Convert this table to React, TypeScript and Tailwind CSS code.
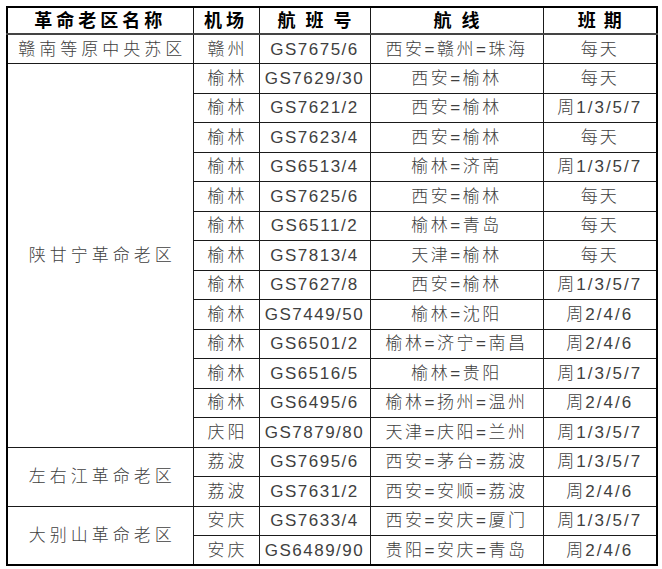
type Flight = {
  airport: string
  no: string
  route: string
  days: string
}

type Region = {
  name: string
  flights: Flight[]
}

const regions: Region[] = [
  {
    name: '赣南等原中央苏区',
    flights: [{ airport: '赣州', no: 'GS7675/6', route: '西安=赣州=珠海', days: '每天' }],
  },
  {
    name: '陕甘宁革命老区',
    flights: [
      { airport: '榆林', no: 'GS7629/30', route: '西安=榆林', days: '每天' },
      { airport: '榆林', no: 'GS7621/2', route: '西安=榆林', days: '周1/3/5/7' },
      { airport: '榆林', no: 'GS7623/4', route: '西安=榆林', days: '每天' },
      { airport: '榆林', no: 'GS6513/4', route: '榆林=济南', days: '周1/3/5/7' },
      { airport: '榆林', no: 'GS7625/6', route: '西安=榆林', days: '每天' },
      { airport: '榆林', no: 'GS6511/2', route: '榆林=青岛', days: '每天' },
      { airport: '榆林', no: 'GS7813/4', route: '天津=榆林', days: '每天' },
      { airport: '榆林', no: 'GS7627/8', route: '西安=榆林', days: '周1/3/5/7' },
      { airport: '榆林', no: 'GS7449/50', route: '榆林=沈阳', days: '周2/4/6' },
      { airport: '榆林', no: 'GS6501/2', route: '榆林=济宁=南昌', days: '周2/4/6' },
      { airport: '榆林', no: 'GS6516/5', route: '榆林=贵阳', days: '周1/3/5/7' },
      { airport: '榆林', no: 'GS6495/6', route: '榆林=扬州=温州', days: '周2/4/6' },
      { airport: '庆阳', no: 'GS7879/80', route: '天津=庆阳=兰州', days: '周1/3/5/7' },
    ],
  },
  {
    name: '左右江革命老区',
    flights: [
      { airport: '荔波', no: 'GS7695/6', route: '西安=茅台=荔波', days: '周1/3/5/7' },
      { airport: '荔波', no: 'GS7631/2', route: '西安=安顺=荔波', days: '周2/4/6' },
    ],
  },
  {
    name: '大别山革命老区',
    flights: [
      { airport: '安庆', no: 'GS7633/4', route: '西安=安庆=厦门', days: '周1/3/5/7' },
      { airport: '安庆', no: 'GS6489/90', route: '贵阳=安庆=青岛', days: '周2/4/6' },
    ],
  },
]

const cjk = "font-['Liberation_Sans','Noto_Sans_CJK_SC',sans-serif]"
const cell = 'border border-[#1a1a1a] text-center p-0 h-[29.5px] leading-none text-[17px] font-light text-[#404040] whitespace-nowrap'
const head = 'border border-[#1a1a1a] p-0 text-[18px] font-bold text-black leading-none'

export default function App() {
  return (
    <div className="bg-white w-[662px] h-[569px] pl-[6px] pt-[6px]">
      <table className={`${cjk} border-collapse table-fixed border-2 border-black w-[650px]`}>
        <colgroup>
          <col className="w-[186px]" />
          <col className="w-[66px]" />
          <col className="w-[111px]" />
          <col className="w-[173px]" />
          <col className="w-[114px]" />
        </colgroup>
        <thead>
          <tr className="h-[27px] border-b-2 border-[#444]">
            <th className={`${head} tracking-[4px]`}>革命老区名称</th>
            <th className={`${head} tracking-[4px]`}>机场</th>
            <th className={`${head} tracking-[10px] pl-[10px]`}>航班号</th>
            <th className={`${head} tracking-[10px] pl-[10px]`}>航线</th>
            <th className={`${head} tracking-[8px] pl-[8px]`}>班期</th>
          </tr>
        </thead>
        <tbody>
          {regions.map(r =>
            r.flights.map((f, i) => (
              <tr key={r.name + i}>
                {i === 0 && (
                  <td rowSpan={r.flights.length} className={`${cell} tracking-[4px] pl-[4px]`}>
                    {r.name}
                  </td>
                )}
                <td className={`${cell} tracking-[3px] pl-[3px]`}>{f.airport}</td>
                <td className={`${cell} tracking-[1.5px]`}>{f.no}</td>
                <td className={`${cell} tracking-[2.5px]`}>{f.route}</td>
                <td className={`${cell} tracking-[2px]`}>{f.days}</td>
              </tr>
            ))
          )}
        </tbody>
      </table>
    </div>
  )
}
